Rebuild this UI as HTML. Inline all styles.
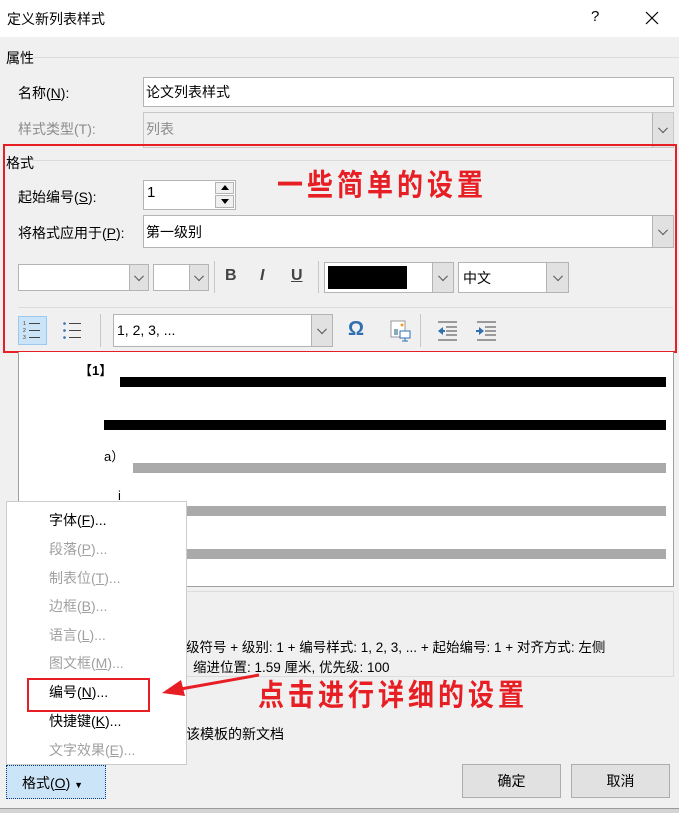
<!DOCTYPE html>
<html><head><meta charset="utf-8"><style>
*{box-sizing:border-box;margin:0;padding:0}
body{width:679px;height:813px;background:#f0f0f0;position:relative;overflow:hidden;font-family:"Liberation Sans","Noto Sans CJK SC",sans-serif;font-size:14px;color:#000}
.a{position:absolute;white-space:nowrap}
.inp{position:absolute;background:#fff;border:1px solid #b4b4b4}
.btn{position:absolute;background:#e1e1e1;border-left:1px solid #b4b4b4;top:0;bottom:0;right:0}
.btn:after{content:"";position:absolute;left:50%;top:50%;width:6px;height:6px;border-right:1px solid #555;border-bottom:1px solid #555;transform:translate(-50%,-75%) rotate(45deg)}
.line{position:absolute;height:1px;background:#dcdcdc}
.sep{position:absolute;width:1px;background:#c8c8c8}
.red{color:#e81e25;font-weight:bold;font-size:26px;letter-spacing:4px;transform:scaleY(1.15);transform-origin:top left}
.mi{position:absolute;left:49px;color:#a0a0a0;font-size:14px}
.bar{position:absolute;height:10px}
</style></head><body>
<div class="a" style="left:0;top:0;width:679px;height:37px;background:#fff"></div>
<div class="a" style="left:7px;top:9px;font-size:14px">定义新列表样式</div>
<div class="a" style="left:591px;top:8px;font-size:15px">?</div>
<svg class="a" style="left:645px;top:11px" width="14" height="14"><path d="M1 1L13 13M13 1L1 13" stroke="#000" stroke-width="1.2"/></svg>

<div class="a" style="left:6px;top:48px">属性</div>
<div class="line" style="left:32px;top:57px;width:647px"></div>
<div class="a" style="left:18px;top:83px">名称(<u>N</u>):</div>
<div class="inp" style="left:143px;top:77px;width:531px;height:30px"></div>
<div class="a" style="left:146px;top:82px">论文列表样式</div>
<div class="a" style="left:18px;top:119px;color:#8c8c8c">样式类型(T):</div>
<div class="inp" style="left:143px;top:112px;width:531px;height:36px;background:#f0f0f0;border-color:#c8c8c8"><div class="btn" style="width:21px"></div></div>
<div class="a" style="left:146px;top:119px;color:#8c8c8c">列表</div>

<div class="a" style="left:6px;top:153px">格式</div>
<div class="line" style="left:32px;top:160px;width:640px"></div>
<div class="a" style="left:18px;top:187px">起始编号(<u>S</u>):</div>
<div class="inp" style="left:143px;top:180px;width:93px;height:30px"></div>
<div class="a" style="left:147px;top:184px;font-size:15px">1</div>
<div class="a" style="left:215px;top:182px;width:19px;height:12px;background:#f0f0f0;border:1px solid #b4b4b4"><div style="margin:2px auto;width:0;height:0;border-left:4px solid transparent;border-right:4px solid transparent;border-bottom:5px solid #000"></div></div>
<div class="a" style="left:215px;top:195px;width:19px;height:13px;background:#f0f0f0;border:1px solid #b4b4b4"><div style="margin:3px auto;width:0;height:0;border-left:4px solid transparent;border-right:4px solid transparent;border-top:5px solid #000"></div></div>
<div class="a red" style="left:277px;top:162px">一些简单的设置</div>
<div class="a" style="left:18px;top:223px">将格式应用于(<u>P</u>):</div>
<div class="inp" style="left:143px;top:215px;width:531px;height:33px"><div class="btn" style="width:21px"></div></div>
<div class="a" style="left:146px;top:222px">第一级别</div>

<div class="inp" style="left:18px;top:264px;width:131px;height:27px"><div class="btn" style="width:19px"></div></div>
<div class="inp" style="left:153px;top:264px;width:56px;height:27px"><div class="btn" style="width:19px"></div></div>
<div class="sep" style="left:214px;top:261px;height:32px"></div>
<div class="a" style="left:225px;top:267px;font-weight:bold;font-size:16px;color:#444">B</div>
<div class="a" style="left:260px;top:267px;font-style:italic;font-weight:bold;font-size:16px;color:#444">I</div>
<div class="a" style="left:291px;top:267px;text-decoration:underline;font-weight:bold;font-size:16px;color:#444">U</div>
<div class="sep" style="left:318px;top:261px;height:32px"></div>
<div class="inp" style="left:324px;top:262px;width:130px;height:31px"><div class="a" style="left:3px;top:3px;width:79px;height:23px;background:#000"></div><div class="btn" style="width:21px"></div></div>
<div class="inp" style="left:458px;top:262px;width:111px;height:31px"><div class="btn" style="width:22px"></div></div>
<div class="a" style="left:463px;top:268px">中文</div>
<div class="line" style="left:18px;top:307px;width:655px"></div>

<div class="a" style="left:18px;top:316px;width:29px;height:29px;background:#cce4f7;border:1px solid #99c9ef"></div>
<svg class="a" style="left:20px;top:318px" width="25" height="25"><g fill="#333" font-size="5" font-family="Liberation Sans"><text x="3" y="7">1</text><text x="3" y="14">2</text><text x="3" y="21">3</text></g><path d="M9 5.5h11M9 12.5h11M9 19.5h11" stroke="#444"/></svg>
<svg class="a" style="left:60px;top:318px" width="25" height="25"><g fill="#2f6fb0"><circle cx="4.5" cy="5.5" r="1.3"/><circle cx="4.5" cy="12.5" r="1.3"/><circle cx="4.5" cy="19.5" r="1.3"/></g><path d="M9 5.5h12M9 12.5h12M9 19.5h12" stroke="#444"/></svg>
<div class="sep" style="left:100px;top:314px;height:33px"></div>
<div class="inp" style="left:113px;top:314px;width:220px;height:33px"><div class="btn" style="width:21px"></div></div>
<div class="a" style="left:117px;top:322px">1, 2, 3, ...</div>
<div class="a" style="left:348px;top:318px;font-size:20px;font-weight:bold;color:#2f6fb0">Ω</div>
<svg class="a" style="left:390px;top:320px" width="22" height="24"><rect x="1" y="1" width="14" height="16" fill="#fff" stroke="#999"/><rect x="4" y="9" width="4" height="6" fill="#8ab"/><circle cx="12" cy="5" r="1.5" fill="#f0a030"/><rect x="10" y="11" width="10" height="7" fill="#fff" stroke="#2f6fb0"/><path d="M15 18v3M12 21h6" stroke="#2f6fb0"/></svg>
<div class="sep" style="left:420px;top:314px;height:33px"></div>
<svg class="a" style="left:436px;top:320px" width="24" height="22"><path d="M2 2h19M10 7h11M10 11h11M10 15h11M2 20h19" stroke="#444"/><path d="M2 11l5-4v8z" fill="#2f6fb0"/><path d="M6 11h3" stroke="#2f6fb0" stroke-width="2"/></svg>
<svg class="a" style="left:475px;top:320px" width="24" height="22"><path d="M2 2h19M10 7h11M10 11h11M10 15h11M2 20h19" stroke="#444"/><path d="M9 11l-5-4v8z" fill="#2f6fb0"/><path d="M1 11h4" stroke="#2f6fb0" stroke-width="2"/></svg>

<div class="a" style="left:3px;top:144px;width:674px;height:209px;border:2px solid #e81e25"></div>

<div class="a" style="left:18px;top:352px;width:656px;height:235px;background:#fff;border:1px solid #a0a0a0;border-top:none"></div>
<div class="a" style="left:79px;top:360px;font-weight:bold;font-size:13px">【1】</div>
<div class="bar" style="left:120px;top:377px;width:546px;background:#000"></div>
<div class="bar" style="left:104px;top:420px;width:562px;background:#000"></div>
<div class="a" style="left:104px;top:446px;font-size:13px">a）</div>
<div class="bar" style="left:133px;top:463px;width:533px;background:#aaa"></div>
<div class="a" style="left:118px;top:488px;font-size:13px">i</div>
<div class="bar" style="left:186px;top:506px;width:480px;background:#aaa"></div>
<div class="bar" style="left:186px;top:549px;width:480px;background:#aaa"></div>

<div class="a" style="left:186px;top:591px;width:488px;height:86px;border:1px solid #dcdcdc;border-left:none"></div>
<div class="a" style="left:186px;top:636px;font-size:13.5px">级符号 + 级别: 1 + 编号样式: 1, 2, 3, ... + 起始编号: 1 + 对齐方式: 左侧</div>
<div class="a" style="left:193px;top:656px;font-size:13.5px">缩进位置:  1.59 厘米, 优先级: 100</div>
<div class="a red" style="left:258px;top:672px">点击进行详细的设置</div>
<div class="a" style="left:186px;top:724px">该模板的新文档</div>

<div class="a" style="left:6px;top:501px;width:181px;height:264px;background:#fff;border:1px solid #ccc"></div>
<div class="mi" style="top:510px;color:#000">字体(<u>F</u>)...</div>
<div class="mi" style="top:539px">段落(<u>P</u>)...</div>
<div class="mi" style="top:568px">制表位(<u>T</u>)...</div>
<div class="mi" style="top:596px">边框(<u>B</u>)...</div>
<div class="mi" style="top:625px">语言(<u>L</u>)...</div>
<div class="mi" style="top:653px">图文框(<u>M</u>)...</div>
<div class="mi" style="top:682px;color:#000">编号(<u>N</u>)...</div>
<div class="mi" style="top:711px;color:#000">快捷键(<u>K</u>)...</div>
<div class="mi" style="top:740px">文字效果(<u>E</u>)...</div>
<div class="a" style="left:27px;top:678px;width:123px;height:34px;border:2px solid #e81e25"></div>
<svg class="a" style="left:155px;top:670px" width="110" height="30"><path d="M104 5L20 20" stroke="#e81e25" stroke-width="3"/><path d="M7 23L26 10L30 26z" fill="#e81e25"/></svg>

<div class="a" style="left:6px;top:765px;width:100px;height:34px;background:#cce4f7;border:1px dotted #0a3f8a"></div>
<div class="a" style="left:22px;top:773px">格式(<u>O</u>) <span style="font-size:9px">▼</span></div>
<div class="a" style="left:462px;top:764px;width:99px;height:34px;background:#e1e1e1;border:1px solid #adadad;text-align:center;line-height:32px">确定</div>
<div class="a" style="left:571px;top:764px;width:99px;height:34px;background:#e1e1e1;border:1px solid #adadad;text-align:center;line-height:32px">取消</div>
<div class="a" style="left:0;top:808px;width:679px;height:5px;background:#d4d4d4;border-top:1px solid #999"></div>
</body></html>
